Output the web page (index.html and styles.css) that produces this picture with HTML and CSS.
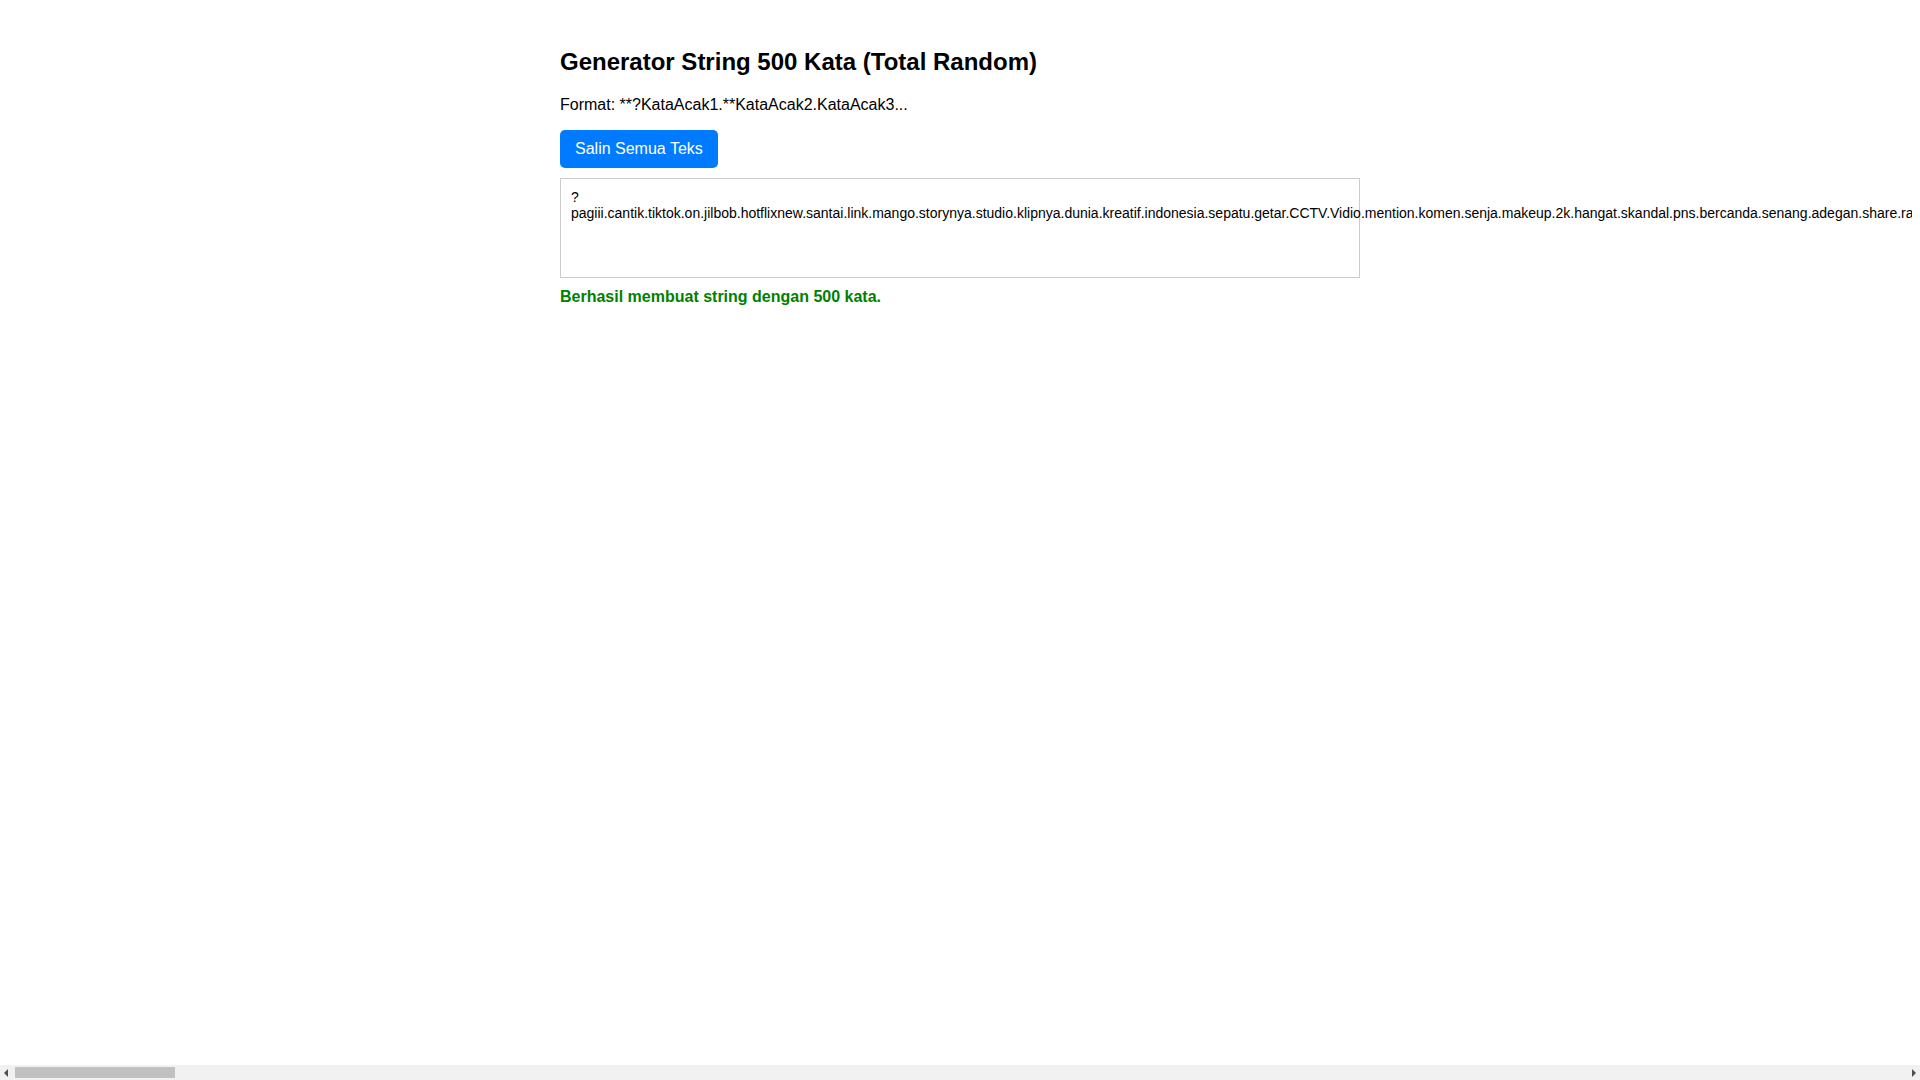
FILE: index.html
```html
<!DOCTYPE html>
<html lang="id">
<head>
<meta charset="utf-8">
<title>Generator String 500 Kata</title>
<link rel="stylesheet" href="styles.css">
</head>
<body>
<div class="container">
  <h2 class="title">Generator String 500 Kata (Total Random)</h2>
  <p class="format">Format: **?KataAcak1.**KataAcak2.KataAcak3...</p>
  <button class="copy-btn" type="button">Salin Semua Teks</button>
  <div class="output">? pagiii.cantik.tiktok.on.jilbob.hotflixnew.santai.link.mango.storynya.studio.klipnya.dunia.kreatif.indonesia.sepatu.getar.CCTV.Vidio.mention.komen.senja.makeup.2k.hangat.skandal.pns.bercanda.senang.adegan.share.rayuan.viral.malam.cinta.hujan.kopi.pantai.gunung.kota.desa.rumah.jalan.motor.mobil.kereta.pesawat.kucing.anjing.burung.ikan.nasi.goreng.sate.bakso.mie.teh.susu.roti.keju.coklat.manis.pedas.asin.segar.dingin.panas.cerah.mendung.pelangi.bintang.bulan.matahari.langit.awan.angin.laut.sungai.danau.hutan.taman.bunga.mawar.melati.anggrek.pohon.daun.buah.apel.jeruk.mangga.pisang.durian.rambutan.salak.semangka.anggur.musik.lagu.video.foto.kamera.lensa.editor.konten.kreator.youtube.instagram.facebook.twitter.story.reels.live.streaming.gaming.esport.mabar.sultan.bocil.gabut.santuy.mantul.kepo.baper.julid.gemoy.receh.lucu.kocak.seru.heboh.terbaru.terkini.hits.trending.populer.keren.mantap.jos.asik.bahagia.sedih.rindu.kangen.sayang.pacar.teman.sahabat.keluarga.ibu.ayah.adik.kakak.nenek.kakek.sekolah.kampus.kantor.kerja.libur.liburan.mudik.lebaran.puasa.sahur.ngabuburit.takjil.ramadhan.natal.tahun.baru.pesta.konser.festival.pasar.mall.diskon.promo.gratis.ongkir.belanja.online.shopee.tokopedia.lazada.dompet.saldo.pulsa.kuota.internet.wifi.sinyal.hp.android.iphone.laptop.gadget.aplikasi.game.update.download.upload.subscribe.like.follow.komentar.netizen.warganet.berita.gosip.artis.selebgram.influencer.model.fashion.hijab.outfit.kaos.celana.jaket.topi.tas.jam.kacamata.cincin.kalung.gelang.parfum.skincare.serum.lipstik.bedak.maskara.tutorial.review.unboxing.vlog.podcast.prank.challenge.dance.joget.karaoke.cover.akustik.gitar.piano.drum.biola.suling.gamelan.wayang.batik.keris.candi.borobudur.bali.jakarta.bandung.surabaya.medan.makassar.jogja.solo.semarang.malang.bogor.depok.bekasi.tangerang.lombok.papua.aceh.riau.jambi.bengkulu.lampung.banten.kalimantan.sulawesi.sumatra.jawa.maluku.flores.toraja.bromo.rinjani.semeru.merapi.kawah.air.terjun.goa.pulau.karang.ombak.pasir.senja.fajar.subuh.siang.sore.pagi.esok.kemarin.nanti.sekarang.selalu.kadang.jarang.sering.cepat.lambat.tinggi.rendah.besar.kecil.panjang.pendek.lebar.sempit.tebal.tipis.berat.ringan.kuat.lemah.pintar.bodoh.rajin.malas.cantik.ganteng.imut.manja.galak.judes.ramah.sopan.jujur.setia.sabar.ikhlas.tulus.berani.takut.malu.bangga.senyum.tawa.tangis.mimpi.harapan.doa.semangat.motivasi.inspirasi.kreatif.inovasi.prestasi.juara.menang.kalah.skor.gol.bola.futsal.basket.voli.badminton.renang.lari.sepeda.yoga.gym.diet.sehat.vitamin.obat.dokter.perawat.rumahsakit.apotek.klinik.vaksin.masker.virus.pandemi.karantina.normal.baru.ekonomi.bisnis.usaha.modal.untung.rugi.investasi.saham.kripto.bitcoin.emas.perak.rupiah.dolar.bank.kredit.cicilan.tabungan.gaji.bonus.lembur.meeting.zoom.webinar.seminar.kursus.belajar.ujian.nilai.rapor.wisuda.sarjana.skripsi.dosen.guru.murid.kelas.pelajaran.buku.pensil.pulpen.kertas.tinta.meja.kursi.lemari.kasur.bantal.selimut.kamar.dapur.ruang.tamu.teras.halaman.pagar.atap.jendela.pintu.lantai.dinding.lampu.kipas.tv.radio.kulkas.kompor.panci.wajan.piring.gelas.sendok.garpu.pisau.sapu.pel.ember.sabun.sampo.handuk.mandi.tidur.bangun.makan.minum.jalan2.pergi.pulang.datang.tunggu.cari.temu.lihat.dengar.bicara.tulis.baca.hitung.gambar.warna.merah.biru.hijau.kuning.ungu.jingga.putih.hitam</div>
  <p class="status">Berhasil membuat string dengan 500 kata.</p>
</div>
<div class="hscroll" aria-hidden="true">
  <span class="hscroll-arrow hscroll-left"></span>
  <span class="hscroll-thumb"></span>
  <span class="hscroll-arrow hscroll-right"></span>
</div>
</body>
</html>
```

FILE: styles.css
```css
html, body {
  background: #ffffff;
}

body {
  margin: 8px;
  font-family: "Liberation Sans", Arial, sans-serif;
  color: #000000;
}

.container {
  max-width: 800px;
  margin: 0 auto;
  padding: 20px;
}

.title {
  font-size: 24px;
  font-weight: bold;
  margin: 20px 0;
}

.format {
  font-size: 16px;
  margin: 16px 0;
}

.copy-btn {
  display: block;
  font-family: "Liberation Sans", Arial, sans-serif;
  font-size: 16px;
  line-height: normal;
  padding: 10px 15px;
  background: #007bff;
  color: #ffffff;
  border: none;
  border-radius: 5px;
  cursor: pointer;
}

.output {
  margin-top: 10px;
  box-sizing: border-box;
  height: 100px;
  padding: 10px;
  border: 1px solid #cccccc;
  background: #ffffff;
  font-size: 14px;
  line-height: 16px;
}

.status {
  margin: 10px 0;
  font-size: 16px;
  font-weight: bold;
  color: #008000;
}

/* imitation of the browser's horizontal scrollbar shown in the reference */
.hscroll {
  position: fixed;
  left: 0;
  right: 0;
  bottom: 0;
  height: 15px;
  background: #f1f1f1;
}

.hscroll-thumb {
  position: absolute;
  left: 15px;
  top: 2px;
  width: 160px;
  height: 11px;
  background: #c1c1c1;
}

.hscroll-arrow {
  position: absolute;
  top: 4px;
  width: 0;
  height: 0;
  border-top: 4px solid transparent;
  border-bottom: 4px solid transparent;
}

.hscroll-left {
  left: 4px;
  border-right: 4px solid #505050;
}

.hscroll-right {
  right: 4px;
  border-left: 4px solid #505050;
}
```
